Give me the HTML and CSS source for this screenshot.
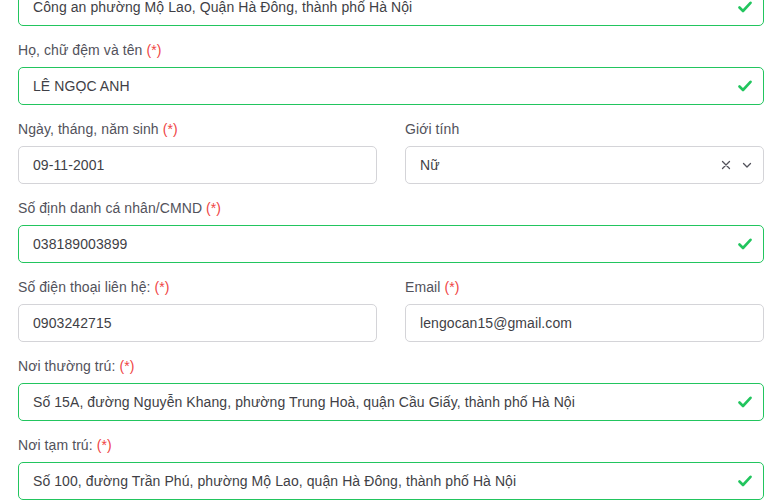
FILE: index.html
```html
<!DOCTYPE html>
<html lang="vi">
<head>
<meta charset="utf-8">
<link rel="stylesheet" href="styles.css">
</head>
<body>
<form class="form">
  <div class="group">
    <div class="field valid"><span class="value">Công an phường Mộ Lao, Quận Hà Đông, thành phố Hà Nội</span>
      <svg class="check" viewBox="0 0 14 12"><path d="M1.5 6.5 L5 10 L12.5 1.8"/></svg></div>
  </div>
  <div class="group">
    <label class="label">Họ, chữ đệm và tên <span class="req">(*)</span></label>
    <div class="field valid"><span class="value">LÊ NGỌC ANH</span>
      <svg class="check" viewBox="0 0 14 12"><path d="M1.5 6.5 L5 10 L12.5 1.8"/></svg></div>
  </div>
  <div class="row">
    <div class="group">
      <label class="label">Ngày, tháng, năm sinh <span class="req">(*)</span></label>
      <div class="field"><span class="value">09-11-2001</span></div>
    </div>
    <div class="group">
      <label class="label">Giới tính</label>
      <div class="field select"><span class="value">Nữ</span>
        <span class="icons">
          <svg class="clear" viewBox="0 0 10 10"><path d="M1.5 1.5 L8.5 8.5 M8.5 1.5 L1.5 8.5"/></svg>
          <svg class="chev" viewBox="0 0 10 10"><path d="M1.5 3.5 L5 7 L8.5 3.5"/></svg>
        </span>
      </div>
    </div>
  </div>
  <div class="group">
    <label class="label">Số định danh cá nhân/CMND <span class="req">(*)</span></label>
    <div class="field valid"><span class="value">038189003899</span>
      <svg class="check" viewBox="0 0 14 12"><path d="M1.5 6.5 L5 10 L12.5 1.8"/></svg></div>
  </div>
  <div class="row">
    <div class="group">
      <label class="label">Số điện thoại liên hệ: <span class="req">(*)</span></label>
      <div class="field"><span class="value">0903242715</span></div>
    </div>
    <div class="group">
      <label class="label">Email <span class="req">(*)</span></label>
      <div class="field"><span class="value">lengocan15@gmail.com</span></div>
    </div>
  </div>
  <div class="group">
    <label class="label">Nơi thường trú: <span class="req">(*)</span></label>
    <div class="field valid"><span class="value">Số 15A, đường Nguyễn Khang, phường Trung Hoà, quận Cầu Giấy, thành phố Hà Nội</span>
      <svg class="check" viewBox="0 0 14 12"><path d="M1.5 6.5 L5 10 L12.5 1.8"/></svg></div>
  </div>
  <div class="group">
    <label class="label">Nơi tạm trú: <span class="req">(*)</span></label>
    <div class="field valid"><span class="value">Số 100, đường Trần Phú, phường Mộ Lao, quận Hà Đông, thành phố Hà Nội</span>
      <svg class="check" viewBox="0 0 14 12"><path d="M1.5 6.5 L5 10 L12.5 1.8"/></svg></div>
  </div>
</form>
</body>
</html>
```
FILE: styles.css
```css
html, body {
  margin: 0;
  padding: 0;
  background: #ffffff;
  overflow: hidden;
}
body {
  font-family: "Liberation Sans", Arial, sans-serif;
  font-size: 14px;
  letter-spacing: 0.08px;
  color: #3f3f46;
}
.form {
  display: flex;
  flex-direction: column;
  gap: 14px;
  padding: 0 17px 0 18px;
  margin-top: -12px;
}
.row {
  display: grid;
  grid-template-columns: 1fr 1fr;
  column-gap: 28px;
}
.group {
  display: flex;
  flex-direction: column;
}
.label {
  display: block;
  line-height: 20px;
  margin-bottom: 7px;
  color: #52525b;
}
.req {
  color: #ef4444;
}
.field {
  box-sizing: border-box;
  height: 38px;
  border: 1px solid #d4d4d8;
  border-radius: 5px;
  display: flex;
  align-items: center;
  padding: 0 11px 0 14px;
  color: #3f3f46;
}
.field.valid {
  border-color: #22c55e;
}
.value {
  flex: 1;
  white-space: nowrap;
  overflow: hidden;
}
.check {
  width: 14px;
  height: 12px;
  fill: none;
  stroke: #22c55e;
  stroke-width: 2.6;
  stroke-linecap: round;
  stroke-linejoin: round;
}
.icons {
  display: flex;
  align-items: center;
  gap: 11px;
}
.clear, .chev {
  width: 10px;
  height: 10px;
  fill: none;
  stroke: #52525b;
  stroke-width: 1.3;
  stroke-linecap: round;
  stroke-linejoin: round;
}
```
